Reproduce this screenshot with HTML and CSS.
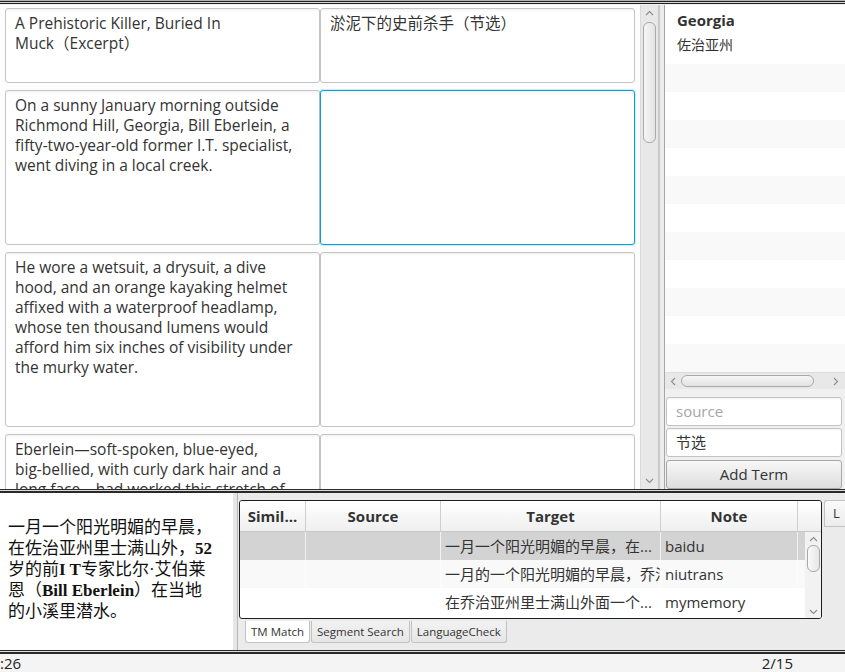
FILE: index.html
```html
<!DOCTYPE html>
<html lang="en">
<head>
<meta charset="utf-8">
<title>Translation Editor</title>
<link rel="stylesheet" href="styles.css">
</head>
<body>
<div class="app">
  <div class="rule-top"></div>
  <div class="top">
    <div class="seglist">
      <div class="row r1">
        <div class="cell">A Prehistoric Killer, Buried In<br>Muck（Excerpt）</div>
        <div class="cell">淤泥下的史前杀手（节选）</div>
      </div>
      <div class="row r2">
        <div class="cell">On a sunny January morning outside<br>Richmond Hill, Georgia, Bill Eberlein, a<br>fifty-two-year-old former I.T. specialist,<br>went diving in a local creek.</div>
        <div class="cell focus"></div>
      </div>
      <div class="row r3">
        <div class="cell">He wore a wetsuit, a drysuit, a dive<br>hood, and an orange kayaking helmet<br>affixed with a waterproof headlamp,<br>whose ten thousand lumens would<br>afford him six inches of visibility under<br>the murky water.</div>
        <div class="cell"></div>
      </div>
      <div class="row r4">
        <div class="cell">Eberlein—soft-spoken, blue-eyed,<br>big-bellied, with curly dark hair and a<br>long face—had worked this stretch of<br>river for years.</div>
        <div class="cell"></div>
      </div>
    </div>
    <div class="vscroll">
      <div class="varrow"><svg width="9" height="6" viewBox="0 0 9 6"><path d="M1 5 L4.5 1.5 L8 5" fill="none" stroke="#8c8c8c" stroke-width="1.1"/></svg></div>
      <div class="vthumb"></div>
      <div class="fill"></div>
      <div class="varrow"><svg width="9" height="6" viewBox="0 0 9 6"><path d="M1 1 L4.5 4.5 L8 1" fill="none" stroke="#8c8c8c" stroke-width="1.1"/></svg></div>
    </div>
    <div class="vdiv"></div>
    <div class="gloss">
      <div class="glist">
        <div class="gitem gfirst"><div class="gterm">Georgia</div><div class="gtrans">佐治亚州</div></div>
        <div class="gitem"></div>
        <div class="gitem"></div>
        <div class="gitem"></div>
        <div class="gitem"></div>
        <div class="gitem"></div>
        <div class="gitem"></div>
        <div class="gitem"></div>
        <div class="gitem"></div>
        <div class="gitem"></div>
        <div class="gitem"></div>
        <div class="gitem"></div>
      </div>
      <div class="hscroll">
        <div class="harrow"><svg width="6" height="9" viewBox="0 0 6 9"><path d="M5 1 L1.5 4.5 L5 8" fill="none" stroke="#8c8c8c" stroke-width="1.1"/></svg></div>
        <div class="hthumb"></div>
        <div class="fill"></div>
        <div class="harrow"><svg width="6" height="9" viewBox="0 0 6 9"><path d="M1 1 L4.5 4.5 L1 8" fill="none" stroke="#8c8c8c" stroke-width="1.1"/></svg></div>
      </div>
      <div class="gform">
        <div class="field placeholder">source</div>
        <div class="field">节选</div>
        <div class="btn">Add Term</div>
      </div>
    </div>
  </div>
  <div class="hdiv"></div>
  <div class="bottom">
    <div class="srcview">一月一个阳光明媚的早晨，<br>在佐治亚州里士满山外，<b>52</b><br>岁的前<b>I T</b>专家比尔·艾伯莱<br>恩（<b>Bill Eberlein</b>）在当地<br>的小溪里潜水。</div>
    <div class="bdiv"></div>
    <div class="tabmain">
      <div class="tbox">
        <div class="thead">
          <div class="th">Simil...</div>
          <div class="th">Source</div>
          <div class="th">Target</div>
          <div class="th">Note</div>
          <div class="th"></div>
        </div>
        <div class="tbody">
          <div class="trows">
            <div class="tr sel"><div class="td"></div><div class="td"></div><div class="td">一月一个阳光明媚的早晨，在...</div><div class="td">baidu</div><div class="td"></div></div>
            <div class="tr odd"><div class="td"></div><div class="td"></div><div class="td">一月的一个阳光明媚的早晨，乔治</div><div class="td">niutrans</div><div class="td"></div></div>
            <div class="tr"><div class="td"></div><div class="td"></div><div class="td">在乔治亚州里士满山外面一个...</div><div class="td">mymemory</div><div class="td"></div></div>
          </div>
          <div class="tvscroll">
            <div class="tarrow"><svg width="9" height="6" viewBox="0 0 9 6"><path d="M1 5 L4.5 1.5 L8 5" fill="none" stroke="#8c8c8c" stroke-width="1.1"/></svg></div>
            <div class="tthumb"></div>
            <div class="fill"></div>
            <div class="tarrow"><svg width="9" height="6" viewBox="0 0 9 6"><path d="M1 1 L4.5 4.5 L8 1" fill="none" stroke="#8c8c8c" stroke-width="1.1"/></svg></div>
          </div>
        </div>
      </div>
      <div class="tabstrip">
        <div class="tab active">TM Match</div>
        <div class="tab">Segment Search</div>
        <div class="tab">LanguageCheck</div>
      </div>
    </div>
    <div class="sidetabs"><div class="stab">L</div></div>
  </div>
  <div class="hdiv"></div>
  <div class="status"><span class="pos">:26</span><span class="count">2/15</span></div>
</div>
</body>
</html>
```

FILE: styles.css
```css
* { box-sizing: border-box; }
html, body { margin: 0; padding: 0; }
body {
  width: 845px;
  height: 672px;
  overflow: hidden;
  background: #f4f4f4;
  font-family: "Open Sans", "Noto Sans CJK SC", sans-serif;
  font-size: 15px;
  color: #333;
}
.app { display: flex; flex-direction: column; height: 672px; }

.rule-top {
  flex: none;
  height: 5px;
  background: linear-gradient(#b4b4b4 0 1px, #222 1px 2px, #d6d6d6 2px 3px, #222 3px 4px, #f0f0f0 4px 5px);
}
.hdiv {
  flex: none;
  height: 4px;
  background: linear-gradient(#2a2a2a 0 1px, #dcdcdc 1px 2px, #2a2a2a 2px 4px);
}

/* ---------- top pane ---------- */
.top { flex: none; height: 484px; display: flex; }
.seglist {
  width: 640px;
  flex: none;
  background: #fdfdfd;
  padding: 3px 5px 0 5px;
  display: flex;
  flex-direction: column;
  gap: 7px;
  overflow: hidden;
}
.row { display: flex; flex: none; }
.r1 { height: 75px; }
.r2 { height: 155px; }
.r3 { height: 175px; }
.r4 { height: 130px; }
.cell {
  flex: 1 1 0;
  min-width: 0;
  background: #fff;
  border: 1px solid #c4c4c4;
  border-radius: 3px;
  padding: 4px 9px;
  font-size: 15.5px;
  line-height: 20px;
  white-space: nowrap;
  overflow: hidden;
  box-shadow: inset 0 3px 3px -2px rgba(0, 0, 0, 0.07);
}
.cell.focus {
  border-color: #0aa0d6;
  box-shadow: 0 0 0 1px rgba(10, 160, 214, 0.18), inset 0 3px 3px -2px rgba(0, 0, 0, 0.07);
}

.vscroll {
  width: 18px;
  flex: none;
  background: #e8e8e8;
  border-left: 1px solid #dadada;
  display: flex;
  flex-direction: column;
  align-items: center;
}
.varrow { height: 15px; flex: none; display: flex; align-items: center; justify-content: center; }
.varrow:last-child { height: 16px; }
.vthumb {
  flex: none;
  margin-top: 2px;
  width: 13px;
  height: 121px;
  border: 1px solid #a9a9a9;
  border-radius: 6px;
  background: linear-gradient(to right, #f6f6f6, #e3e3e3);
}
.fill { flex: 1; }

.vdiv {
  width: 7px;
  flex: none;
  background: linear-gradient(to right, #c9c9c9 0 2px, #ececec 2px 6px, #a6a6a6 6px 7px);
}

.gloss { width: 180px; flex: none; display: flex; flex-direction: column; }
.glist { height: 367px; flex: none; background: #fff; overflow: hidden; }
.gitem { height: 28px; }
.gitem:nth-child(even) { background: #f9f9f9; }
.gitem.gfirst { height: 59px; padding: 5px 11px 0 12px; }
.gterm { font-weight: bold; line-height: 20px; color: #333; }
.gtrans { margin-top: 5px; line-height: 20px; font-size: 14px; color: #333; }

.hscroll {
  height: 17px;
  flex: none;
  background: #e8e8e8;
  border-top: 1px solid #dcdcdc;
  display: flex;
  align-items: center;
  padding: 0 3px 0 2px;
}
.harrow { width: 12px; height: 14px; flex: none; display: flex; align-items: center; justify-content: center; }
.hthumb {
  flex: none;
  width: 133px;
  height: 12px;
  margin-left: 2px;
  border: 1px solid #a9a9a9;
  border-radius: 6px;
  background: linear-gradient(#f6f6f6, #e3e3e3);
}

.gform {
  height: 100px;
  flex: none;
  background: #f0f0f0;
  padding: 8px 3px 0 1px;
  display: flex;
  flex-direction: column;
  gap: 2px;
}
.field {
  height: 29px;
  flex: none;
  background: #fff;
  border: 1px solid #c2c2c2;
  border-radius: 3px;
  padding: 0 9px;
  line-height: 27px;
  color: #333;
  box-shadow: inset 0 2px 2px -1px rgba(0, 0, 0, 0.05);
}
.field.placeholder { color: #a6a6a6; }
.btn {
  height: 29px;
  flex: none;
  margin-top: 1px;
  border: 1px solid #a8a8a8;
  border-radius: 3px;
  background: linear-gradient(#f7f7f7, #dedede);
  text-align: center;
  line-height: 27px;
  color: #333;
}

/* ---------- bottom pane ---------- */
.bottom { flex: none; height: 157px; display: flex; background: #ebebeb; }
.srcview {
  width: 233px;
  flex: none;
  background: #fff;
  padding: 24px 0 0 8px;
  font-family: "Liberation Serif", "Noto Sans CJK SC", serif;
  font-size: 17px;
  line-height: 21px;
  color: #111;
  white-space: nowrap;
  overflow: hidden;
}
.srcview b { font-weight: bold; }
.bdiv { width: 4px; flex: none; background: #e6e6e6; }
.tabmain {
  width: 585px;
  flex: none;
  border-left: 1px solid #b8b8b8;
  padding: 7px 0 0 1px;
  display: flex;
  flex-direction: column;
}
.tbox {
  height: 119px;
  flex: none;
  background: #fff;
  border: 1px solid #1e1e1e;
  border-radius: 3px;
  overflow: hidden;
  display: flex;
  flex-direction: column;
}
.thead {
  height: 31px;
  flex: none;
  display: grid;
  grid-template-columns: 66px 135px 220px 137px 1fr;
  border-bottom: 1px solid #c8c8c8;
  background: linear-gradient(#ffffff, #efefef);
}
.th {
  border-right: 1px solid #cfcfcf;
  font-weight: bold;
  text-align: center;
  line-height: 30px;
  color: #333;
  white-space: nowrap;
  overflow: hidden;
}
.th:last-child { border-right: none; }
.tbody { flex: 1; display: flex; }
.trows { width: 565px; flex: none; }
.tr {
  height: 28px;
  display: grid;
  grid-template-columns: 66px 135px 220px 137px 1fr;
  background: #fff;
}
.tr.odd { background: #f9f9f9; }
.tr.sel { background: #d3d3d3; }
.td {
  border-right: 1px solid rgba(255, 255, 255, 0.7);
  padding: 0 2px 0 4px;
  line-height: 28px;
  white-space: nowrap;
  overflow: hidden;
  color: #333;
}
.td:last-child { border-right: none; }
.tvscroll {
  width: 16px;
  flex: none;
  background: #f2f2f2;
  display: flex;
  flex-direction: column;
  align-items: center;
}
.tarrow { height: 13px; flex: none; display: flex; align-items: center; justify-content: center; }
.tthumb {
  flex: none;
  width: 13px;
  height: 27px;
  border: 1px solid #a9a9a9;
  border-radius: 6px;
  background: linear-gradient(to right, #fafafa, #e6e6e6);
}
.tabstrip { display: flex; gap: 1px; padding: 2px 0 0 6px; }
.tab {
  height: 22px;
  padding: 0 5px;
  border: 1px solid #c2c2c2;
  border-top: none;
  border-radius: 0 0 3px 3px;
  background: linear-gradient(#f2f2f2, #e6e6e6);
  font-size: 11.5px;
  line-height: 21px;
  color: #333;
}
.tab.active { background: #fff; }
.sidetabs { width: 23px; flex: none; padding: 7px 0 0 2px; background: #ebebeb; }
.stab {
  height: 27px;
  border: 1px solid #c2c2c2;
  border-right: none;
  border-radius: 3px 0 0 0;
  background: linear-gradient(#fafafa, #ececec);
  font-size: 13px;
  line-height: 24px;
  padding-left: 8px;
  color: #333;
}

/* ---------- status ---------- */
.status {
  flex: 1;
  display: flex;
  justify-content: space-between;
  padding: 0 52px 0 0;
  line-height: 18px;
  font-size: 15px;
  color: #222;
  background: #f4f4f4;
}
```
